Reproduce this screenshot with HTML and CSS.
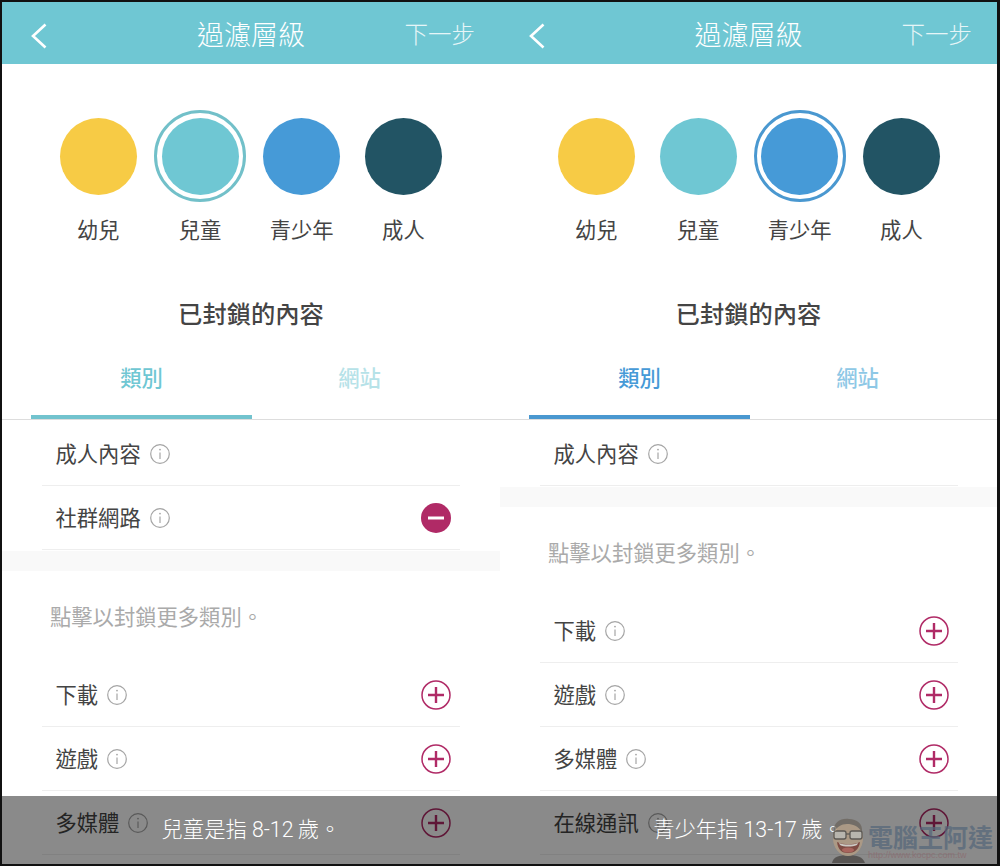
FILE: index.html
```html
<!DOCTYPE html>
<html lang="zh-Hant">
<head>
  <meta charset="UTF-8" />
  <meta name="viewport" content="width=device-width, initial-scale=1.0" />
  <title>過濾層級</title>
  <link rel="stylesheet" href="styles.css">
</head>
<body>
  <svg class="defs" width="0" height="0">
    <symbol id="info" viewBox="0 0 20 20">
      <circle cx="10" cy="10" r="9.3" fill="none" stroke="currentColor" stroke-width="1.2" />
      <circle cx="10" cy="5.6" r="0.9" fill="currentColor" />
      <path d="M10 8.4V15" fill="none" stroke="currentColor" stroke-width="1.2" />
    </symbol>
    <symbol id="plus" viewBox="0 0 30 30">
      <circle cx="15" cy="15" r="14" fill="none" stroke="currentColor" stroke-width="1.5" />
      <path d="M7 15H23M15 7V23" fill="none" stroke="currentColor" stroke-width="2.4" />
    </symbol>
    <symbol id="minus" viewBox="0 0 30 30">
      <circle cx="15" cy="15" r="15" fill="currentColor" />
      <path d="M7 15H23" fill="none" stroke="#fff" stroke-width="3" />
    </symbol>
    <symbol id="back" viewBox="0 0 16 26">
      <path d="M14.5 1.5L2 13L14.5 24.5" fill="none" stroke="currentColor" stroke-width="2.6" />
    </symbol>
  </svg>

  <div class="screens">
    <!-- 兒童 -->
    <main class="phone phone-kid">
      <header class="topbar">
        <svg class="back"><use href="#back" /></svg>
        <h1>過濾層級</h1>
        <span class="next">下一步</span>
      </header>
      <div class="levels">
        <div class="level"><div class="swatch"><span class="dot yellow"></span></div><p>幼兒</p></div>
        <div class="level"><div class="swatch selected"><span class="dot teal"></span></div><p>兒童</p></div>
        <div class="level"><div class="swatch"><span class="dot blue"></span></div><p>青少年</p></div>
        <div class="level"><div class="swatch"><span class="dot navy"></span></div><p>成人</p></div>
      </div>
      <h2>已封鎖的內容</h2>
      <nav class="tabs">
        <a class="tab active">類別</a>
        <a class="tab">網站</a>
      </nav>
      <ul class="list blocked">
        <li><span>成人內容</span><svg class="info"><use href="#info" /></svg></li>
        <li><span>社群網路</span><svg class="info"><use href="#info" /></svg><svg class="act solid"><use href="#minus" /></svg></li>
      </ul>
      <div class="band"></div>
      <p class="hint">點擊以封鎖更多類別。</p>
      <ul class="list">
        <li><span>下載</span><svg class="info"><use href="#info" /></svg><svg class="act"><use href="#plus" /></svg></li>
        <li><span>遊戲</span><svg class="info"><use href="#info" /></svg><svg class="act"><use href="#plus" /></svg></li>
        <li><span>多媒體</span><svg class="info"><use href="#info" /></svg><svg class="act"><use href="#plus" /></svg></li>
      </ul>
      <div class="toast">兒童是指 8-12&#8201;歲。</div>
    </main>

    <!-- 青少年 -->
    <main class="phone phone-teen">
      <header class="topbar">
        <svg class="back"><use href="#back" /></svg>
        <h1>過濾層級</h1>
        <span class="next">下一步</span>
      </header>
      <div class="levels">
        <div class="level"><div class="swatch"><span class="dot yellow"></span></div><p>幼兒</p></div>
        <div class="level"><div class="swatch"><span class="dot teal"></span></div><p>兒童</p></div>
        <div class="level"><div class="swatch selected"><span class="dot blue"></span></div><p>青少年</p></div>
        <div class="level"><div class="swatch"><span class="dot navy"></span></div><p>成人</p></div>
      </div>
      <h2>已封鎖的內容</h2>
      <nav class="tabs">
        <a class="tab active">類別</a>
        <a class="tab">網站</a>
      </nav>
      <ul class="list blocked">
        <li><span>成人內容</span><svg class="info"><use href="#info" /></svg></li>
      </ul>
      <div class="band"></div>
      <p class="hint">點擊以封鎖更多類別。</p>
      <ul class="list">
        <li><span>下載</span><svg class="info"><use href="#info" /></svg><svg class="act"><use href="#plus" /></svg></li>
        <li><span>遊戲</span><svg class="info"><use href="#info" /></svg><svg class="act"><use href="#plus" /></svg></li>
        <li><span>多媒體</span><svg class="info"><use href="#info" /></svg><svg class="act"><use href="#plus" /></svg></li>
        <li><span>在線通訊</span><svg class="info"><use href="#info" /></svg><svg class="act"><use href="#plus" /></svg></li>
      </ul>
      <div class="toast">青少年指 13-17&#8201;歲。</div>
    </main>
  </div>

  <!-- watermark -->
  <div class="mark">
    <svg class="mark-face" viewBox="0 0 40 48">
      <path d="M4 48C5 42 11 40 20 40S35 42 37 48Z" fill="#45423f" />
      <ellipse cx="20" cy="23" rx="15" ry="18" fill="#b8a084" />
      <path d="M6 17C5 7 13 3 21 4C29 4 35 9 34 17C30 11 25 9 19 9C13 9 9 12 6 17Z" fill="#6a635a" />
      <rect x="6" y="16" width="12" height="8" rx="2" fill="#c9c6bd" stroke="#4a4640" stroke-width="1.3" />
      <rect x="22" y="16" width="12" height="8" rx="2" fill="#c9c6bd" stroke="#4a4640" stroke-width="1.3" />
      <path d="M18 19H22" stroke="#4a4640" stroke-width="1.3" />
      <path d="M9 27C15 30 26 30 32 27C31 35 26 38 20 38C14 38 10 35 9 27Z" fill="#7a3328" />
      <path d="M11 28C16 30 25 30 30 28L29 30C24 32 16 32 12 30Z" fill="#e6e2da" />
      <ellipse cx="20" cy="35" rx="6" ry="2.5" fill="#b5584c" />
    </svg>
    <div class="mark-text">
      <strong>電腦王阿達</strong>
      <small>http://www.kocpc.com.tw</small>
    </div>
  </div>
</body>
</html>
```

FILE: styles.css
```css
* {
  box-sizing: border-box;
}
body {
  margin: 0;
  height: 866px;
  overflow: hidden;
  position: relative;
  background: #111;
  font-family: "Noto Sans CJK TC", "Noto Sans", sans-serif;
  color: #444;
}
.defs {
  position: absolute;
}
.screens {
  display: flex;
  padding: 2px 0 0 2px;
}
.phone {
  position: relative;
  width: 498px;
  height: 862px;
  overflow: hidden;
  background: #fff;
}
.phone-teen {
  width: 497px;
}

/* top bar */
.topbar {
  display: flex;
  align-items: center;
  justify-content: center;
  position: relative;
  height: 62px;
  background: #6fc7d3;
  color: #fff;
}
.topbar h1 {
  margin: 0;
  font-size: 27px;
  font-weight: 300;
  line-height: 1;
}
.back {
  position: absolute;
  left: 29px;
  top: 21px;
  width: 16px;
  height: 26px;
}
.next {
  position: absolute;
  right: 25px;
  top: 15px;
  font-size: 23.5px;
  font-weight: 300;
  line-height: 32px;
  color: #e6f5f7;
}

/* level picker */
.levels {
  display: grid;
  grid-template-columns: repeat(4, 101.7px);
  padding: 46px 0 0 45.5px;
}
.level {
  display: flex;
  flex-direction: column;
  align-items: center;
}
.level p {
  margin: 13px 0 1px;
  font-size: 21.3px;
  line-height: 28px;
}
.swatch {
  display: flex;
  align-items: center;
  justify-content: center;
  width: 92px;
  height: 92px;
  border-radius: 50%;
}
.swatch.selected {
  border: 3px solid #72c0c9;
}
.phone-teen .swatch.selected {
  border-color: #4a98d0;
}
.dot {
  width: 77px;
  height: 77px;
  border-radius: 50%;
}
.yellow { background: #f7cb45; }
.teal { background: #6fc7d3; }
.blue { background: #469ad7; }
.navy { background: #225464; }

h2 {
  margin: 53px 0 0;
  text-align: center;
  font-size: 24.3px;
  font-weight: 500;
  line-height: 32px;
}

/* tabs */
.tabs {
  display: grid;
  grid-template-columns: 221px 215px;
  margin-top: 33px;
  padding-left: 29px;
  border-bottom: 1px solid #ddd;
}
.tab {
  padding-bottom: 23px;
  border-bottom: 4px solid transparent;
  text-align: center;
  font-size: 21.3px;
  font-weight: 500;
  line-height: 30px;
  color: #b6e2e8;
}
.tab.active {
  color: #6fc7d3;
  border-bottom-color: #72c3ce;
}
.phone-teen .tab {
  color: #8ec8e6;
}
.phone-teen .tab.active {
  color: #469ad7;
  border-bottom-color: #4a98d0;
}

/* category rows */
.list {
  list-style: none;
  margin: 0 40px;
  padding: 0;
}
.phone-teen .list {
  margin-right: 39px;
}
.blocked {
  margin-top: 2px;
}
.list li {
  display: flex;
  align-items: center;
  height: 64px;
  padding: 0 9px 0 13.5px;
  border-bottom: 1px solid #eee;
  font-size: 21.3px;
}
.list li span {
  padding-bottom: 2px;
}
.info {
  width: 20px;
  height: 20px;
  margin-left: 9px;
  color: #a5a5a5;
}
.act {
  width: 30px;
  height: 30px;
  margin-left: auto;
  color: #b02a66;
}
.band {
  height: 20px;
  margin-top: 1px;
  background: #f9f9f9;
}
.hint {
  margin: 30px 0 32px;
  padding-left: 48px;
  font-size: 21.3px;
  line-height: 30px;
  color: #aaa;
}

/* toast */
.toast {
  position: absolute;
  left: 0;
  right: 0;
  bottom: 0;
  height: 68px;
  padding-top: 19px;
  background: rgba(0, 0, 0, 0.46);
  text-align: center;
  font-family: Roboto, "Noto Sans CJK TC", sans-serif;
  font-size: 21.3px;
  font-weight: 300;
  line-height: 30px;
  color: #fff;
}

/* watermark */
.mark {
  position: absolute;
  left: 828px;
  top: 815px;
  display: flex;
  opacity: 0.72;
}
.mark-face {
  width: 40px;
  height: 48px;
}
.mark-text {
  display: flex;
  flex-direction: column;
  padding-top: 7px;
}
.mark-text strong {
  font-size: 25px;
  line-height: 28px;
  color: #55677a;
  white-space: nowrap;
}
.mark-text small {
  font-family: "Liberation Sans", sans-serif;
  font-size: 9px;
  line-height: 11px;
  color: #8c6a70;
  white-space: nowrap;
}
```
